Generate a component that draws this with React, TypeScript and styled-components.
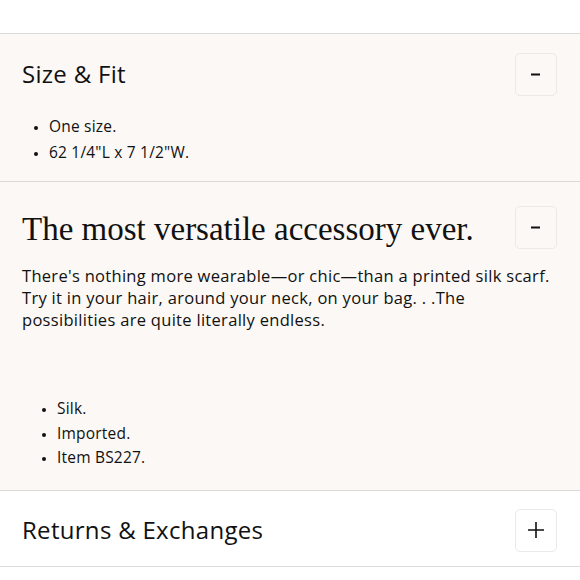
import React from 'react';
import styled, { createGlobalStyle } from 'styled-components';

const GlobalStyle = createGlobalStyle`
  html, body {
    margin: 0;
    padding: 0;
    background: #fff;
  }
  body {
    font-family: "Open Sans", "Noto Sans", sans-serif;
    color: #1a1a1a;
  }
`;

const Page = styled.div`
  padding-top: 33px;
`;

const Section = styled.section<{ $open?: boolean }>`
  background: ${(p) => (p.$open ? '#fbf8f5' : '#fff')};
  border-top: 1px solid #dcdad8;
  &:last-child {
    border-bottom: 1px solid #dcdad8;
  }
`;

const Header = styled.div<{ $pad: string }>`
  display: flex;
  justify-content: space-between;
  align-items: center;
  min-height: 43px;
  padding: ${(p) => p.$pad};
`;

const Title = styled.h2<{ $serif?: boolean }>`
  margin: 0;
  font-weight: 400;
  font-family: ${(p) => (p.$serif ? '"Liberation Serif", serif' : '"Open Sans", "Noto Sans", sans-serif')};
  font-size: ${(p) => (p.$serif ? '33px' : '24px')};
  letter-spacing: ${(p) => (p.$serif ? '0' : '0.3px')};
  line-height: 1.2;
  color: #111;
`;

const ToggleButton = styled.button<{ $open?: boolean; $lift?: number }>`
  width: 42px;
  height: 43px;
  border: 1px solid #ece9e6;
  border-radius: 5px;
  background: ${(p) => (p.$open ? '#fbf8f5' : '#fff')};
  display: flex;
  align-items: center;
  justify-content: center;
  padding: 0;
  margin-bottom: ${(p) => (p.$lift ?? 0) * 2}px;
  margin-top: ${(p) => -(p.$lift ?? 0) * 2}px;
  color: #111;
`;

const Body = styled.div<{ $pad: string }>`
  padding: ${(p) => p.$pad};
`;

const Paragraph = styled.p`
  margin: 0;
  font-size: 16.5px;
  line-height: 22px;
  letter-spacing: 0.3px;
  color: #111;
`;

const List = styled.ul<{ $indent: number; $gap: number; $top?: number }>`
  margin: ${(p) => p.$top ?? 0}px 0 0;
  padding-left: ${(p) => p.$indent}px;
  font-size: 15.5px;
  letter-spacing: 0.2px;
  line-height: ${(p) => p.$gap}px;
  color: #111;

  li::marker {
    font-size: 0.8em;
  }
`;

const MinusIcon = () => (
  <svg width="12" height="3" viewBox="0 0 12 3">
    <rect x="1" y="0.5" width="9" height="2" fill="#111" />
  </svg>
);

const PlusIcon = () => (
  <svg width="18" height="18" viewBox="0 0 18 18">
    <path d="M9 1v16M1 9h16" stroke="#111" strokeWidth="1.6" />
  </svg>
);

const App: React.FC = () => (
  <>
    <GlobalStyle />
    <Page>
      <Section $open>
        <Header $pad="19px 23px 0 22px">
          <Title>Size &amp; Fit</Title>
          <ToggleButton $open aria-label="collapse">
            <MinusIcon />
          </ToggleButton>
        </Header>
        <Body $pad="17px 22px 16px">
          <List $indent={27} $gap={26}>
            <li>One size.</li>
            <li>62 1/4"L x 7 1/2"W.</li>
          </List>
        </Body>
      </Section>
      <Section $open>
        <Header $pad="26px 23px 0 22px">
          <Title $serif>The most versatile accessory ever.</Title>
          <ToggleButton $open $lift={1} aria-label="collapse">
            <MinusIcon />
          </ToggleButton>
        </Header>
        <Body $pad="14px 22px 20px">
          <Paragraph>
            There's nothing more wearable—or chic—than a printed silk scarf. Try it in your hair, around your
            neck, on your bag. . .The possibilities are quite literally endless.
          </Paragraph>
          <List $indent={35} $gap={24.5} $top={65}>
            <li>Silk.</li>
            <li>Imported.</li>
            <li>Item BS227.</li>
          </List>
        </Body>
      </Section>
      <Section>
        <Header $pad="18px 23px 14px 22px">
          <Title>Returns &amp; Exchanges</Title>
          <ToggleButton aria-label="expand">
            <PlusIcon />
          </ToggleButton>
        </Header>
      </Section>
    </Page>
  </>
);

export default App;
